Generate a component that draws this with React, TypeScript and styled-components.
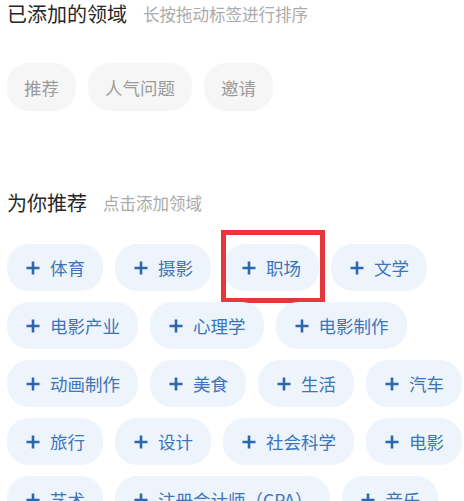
import React from 'react';
import styled, { createGlobalStyle, css } from 'styled-components';

const GlobalStyle = createGlobalStyle`
  html, body {
    margin: 0;
    padding: 0;
    overflow: hidden;
    background: #ffffff;
  }
  body {
    font-family: "Noto Sans CJK SC", "Noto Sans", sans-serif;
  }
`;

const Page = styled.div`
  width: 464px;
  padding-left: 7px;
  box-sizing: border-box;
`;

const Header = styled.div<{ $top: number }>`
  display: flex;
  align-items: center;
  gap: 16px;
  height: 28px;
  margin-top: ${({ $top }) => $top}px;
`;

const Title = styled.span`
  font-size: 20px;
  color: #262626;
  line-height: 28px;
`;

const Hint = styled.span`
  font-size: 16.5px;
  color: #ababab;
  line-height: 28px;
`;

const TagList = styled.div<{ $top: number }>`
  display: flex;
  flex-wrap: wrap;
  column-gap: 12px;
  row-gap: 11px;
  margin-top: ${({ $top }) => $top}px;
`;

const AddedTag = styled.div`
  display: flex;
  align-items: center;
  height: 48px;
  padding: 0 17px;
  border-radius: 22px;
  background: #f6f6f6;
  color: #9b9b9b;
  font-size: 17.5px;
`;

const SuggestTag = styled.div<{ $marked?: boolean }>`
  position: relative;
  display: flex;
  align-items: center;
  gap: 10px;
  height: 47px;
  padding: 0 18px 0 19px;
  border-radius: 22px;
  background: #eef4fb;
  color: #3c75b9;
  font-size: 17.5px;
  white-space: nowrap;

  ${({ $marked }) =>
    $marked &&
    css`
      &::after {
        content: '';
        position: absolute;
        top: -14px;
        bottom: -12px;
        left: -2px;
        right: -6px;
        border: 5px solid #e5383b;
      }
    `}
`;

const PlusIcon = () => (
  <svg width="14" height="14" viewBox="0 0 14 14">
    <path d="M7 0.5V13.5M0.5 7H13.5" stroke="#2b67ae" strokeWidth="2.6" fill="none" />
  </svg>
);

const added = ['推荐', '人气问题', '邀请'];

const suggested = [
  '体育', '摄影', '职场', '文学',
  '电影产业', '心理学', '电影制作',
  '动画制作', '美食', '生活', '汽车',
  '旅行', '设计', '社会科学', '电影',
  '艺术', '注册会计师（CPA）', '音乐',
];

export default function App() {
  return (
    <>
      <GlobalStyle />
      <Page>
        <Header $top={0}>
          <Title>已添加的领域</Title>
          <Hint>长按拖动标签进行排序</Hint>
        </Header>
        <TagList $top={35}>
          {added.map((name) => (
            <AddedTag key={name}>{name}</AddedTag>
          ))}
        </TagList>

        <Header $top={78}>
          <Title>为你推荐</Title>
          <Hint>点击添加领域</Hint>
        </Header>
        <TagList $top={27}>
          {suggested.map((name) => (
            <SuggestTag key={name} $marked={name === '职场'}>
              <PlusIcon />
              {name}
            </SuggestTag>
          ))}
        </TagList>
      </Page>
    </>
  );
}
